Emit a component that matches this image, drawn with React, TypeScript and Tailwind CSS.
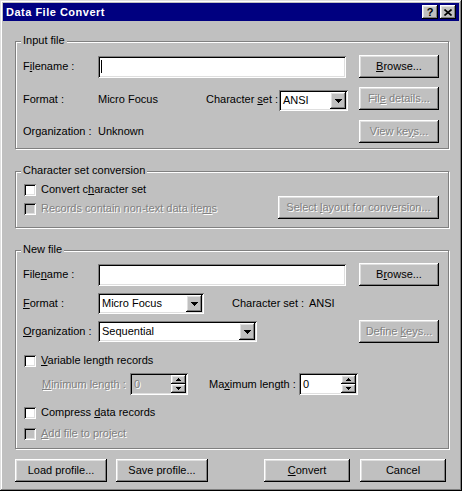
import type { ReactNode } from "react";

// classic 3D bevels
const RAISED =
  "shadow-[inset_-1px_-1px_0_#000,inset_1px_1px_0_#fff,inset_-2px_-2px_0_#808080,inset_2px_2px_0_#dfdfdf]";
const SUNKEN =
  "shadow-[inset_1px_1px_0_#808080,inset_-1px_-1px_0_#fff,inset_2px_2px_0_#000,inset_-2px_-2px_0_#dfdfdf]";
const DIM = "text-[#808080] [text-shadow:1px_1px_0_#fff]";

function Button({
  children,
  className = "",
  disabled = false,
}: {
  children: ReactNode;
  className?: string;
  disabled?: boolean;
}) {
  return (
    <button
      type="button"
      className={`flex h-[23px] shrink-0 items-center justify-center bg-[#c0c0c0] ${RAISED} ${
        disabled ? DIM : "text-black"
      } ${className}`}
    >
      <span>{children}</span>
    </button>
  );
}

function Arrow({ up = false, size = 7 }: { up?: boolean; size?: number }) {
  const h = Math.ceil(size / 2);
  return (
    <svg width={size} height={h} viewBox={`0 0 ${size} ${h}`} shapeRendering="crispEdges">
      <path d={up ? `M0 ${h}H${size}L${size / 2} 0z` : `M0 0H${size}L${size / 2} ${h}z`} fill="#000" />
    </svg>
  );
}

function Combo({ value, className = "" }: { value: string; className?: string }) {
  return (
    <div className={`flex h-[21px] shrink-0 items-stretch bg-white p-[2px] ${SUNKEN} ${className}`}>
      <span className="flex flex-1 items-center pl-[2px]">{value}</span>
      <span className={`flex w-[16px] items-center justify-center bg-[#c0c0c0] ${RAISED}`}>
        <Arrow />
      </span>
    </div>
  );
}

function Spin({ disabled = false, className = "" }: { disabled?: boolean; className?: string }) {
  return (
    <div
      className={`flex h-[22px] shrink-0 p-[2px] ${SUNKEN} ${disabled ? "bg-[#c0c0c0]" : "bg-white"} ${className}`}
    >
      <span className={`flex flex-1 items-center pl-[2px] ${disabled ? DIM : ""}`}>0</span>
      <span className="flex w-[15px] flex-col">
        <span className={`flex flex-1 items-center justify-center bg-[#c0c0c0] ${RAISED}`}>
          <Arrow up size={5} />
        </span>
        <span className={`flex flex-1 items-center justify-center bg-[#c0c0c0] ${RAISED}`}>
          <Arrow size={5} />
        </span>
      </span>
    </div>
  );
}

function Check({ children, disabled = false }: { children: ReactNode; disabled?: boolean }) {
  return (
    <div className="flex h-[13px] items-center">
      <span
        className={`ml-[1px] h-[12px] w-[12px] shrink-0 ${SUNKEN} ${disabled ? "bg-[#c0c0c0]" : "bg-white"}`}
      />
      <span className={`ml-[5px] ${disabled ? DIM : ""}`}>{children}</span>
    </div>
  );
}

function Group({ title, className = "", children }: { title: string; className?: string; children: ReactNode }) {
  return (
    <div
      className={`relative w-[434px] border border-[#808080] pl-[7px] pr-[9px] shadow-[1px_1px_0_#fff,inset_1px_1px_0_#fff] ${className}`}
    >
      <span className="absolute left-[5px] top-[-9px] bg-[#c0c0c0] px-[2px] leading-[14px]">{title}</span>
      {children}
    </div>
  );
}

export default function App() {
  return (
    <div
      className={`h-[491px] w-[462px] bg-[#c0c0c0] p-[3px] font-['Liberation_Sans',Arial,sans-serif] text-[11px] leading-[13px] text-black shadow-[inset_-1px_-1px_0_#000,inset_1px_1px_0_#dfdfdf,inset_-2px_-2px_0_#808080,inset_2px_2px_0_#fff]`}
    >
      {/* caption */}
      <div className="flex h-[18px] items-center bg-[#000080] pl-[3px] pr-[3px]">
        <span className="flex-1 font-bold tracking-[0.5px] text-white">Data File Convert</span>
        <div className="flex gap-[2px]">
          <span className={`flex h-[14px] w-[16px] items-center justify-center bg-[#c0c0c0] font-bold ${RAISED}`}>
            ?
          </span>
          <span className={`flex h-[14px] w-[16px] items-center justify-center bg-[#c0c0c0] ${RAISED}`}>
            <svg width="8" height="7" viewBox="0 0 8 7">
              <path d="M0.5 0.5l7 6M7.5 0.5l-7 6" stroke="#000" strokeWidth="1.6" />
            </svg>
          </span>
        </div>
      </div>

      <div className="px-[12px] pt-[20px]">
        <Group title="Input file" className="h-[108px]">
          <div className="mt-[13px] flex h-[23px] items-center">
            <span className="w-[75px]">
              F<u>i</u>lename :
            </span>
            <div className={`flex h-[22px] w-[248px] items-center bg-white pl-[3px] ${SUNKEN}`}>
              <span className="h-[13px] w-px bg-black" />
            </div>
            <Button className="ml-auto w-[80px]">
              <u>B</u>rowse...
            </Button>
          </div>
          <div className="mt-[9px] flex h-[24px] items-center">
            <span className="w-[75px]">Format :</span>
            <span className="w-[108px]">Micro Focus</span>
            <span className="w-[73px]">
              Character <u>s</u>et :
            </span>
            <Combo value="ANSI" className="w-[69px] self-end" />
            <Button disabled className="ml-auto w-[80px] self-start">
              Fil<u>e</u> details...
            </Button>
          </div>
          <div className="mt-[9px] flex h-[23px] items-center">
            <span className="w-[75px]">Organization :</span>
            <span>Unknown</span>
            <Button disabled className="ml-auto w-[80px]">
              View ke<u>y</u>s...
            </Button>
          </div>
        </Group>

        <Group title="Character set conversion" className="mt-[22px] h-[57px]">
          <div className="mt-[11px]">
            <Check>
              Convert c<u>h</u>aracter set
            </Check>
          </div>
          <div className="flex h-[23px] items-end">
            <div className="mb-[4px]">
              <Check disabled>
                Records contain non-text data ite<u>m</u>s
              </Check>
            </div>
            <Button disabled className="ml-auto w-[161px] self-start">
              Select <u>l</u>ayout for conversion...
            </Button>
          </div>
        </Group>

        <Group title="New file" className="mt-[22px] h-[199px]">
          <div className="mt-[12px] flex h-[23px] items-center">
            <span className="w-[75px]">
              File<u>n</u>ame :
            </span>
            <div className={`h-[22px] w-[248px] bg-white ${SUNKEN}`} />
            <Button className="ml-auto w-[80px]">
              B<u>r</u>owse...
            </Button>
          </div>
          <div className="mt-[7px] flex h-[21px] items-center">
            <span className="w-[75px]">
              <u>F</u>ormat :
            </span>
            <Combo value="Micro Focus" className="w-[106px]" />
            <span className="ml-[28px] w-[77px]">Character set :</span>
            <span>ANSI</span>
          </div>
          <div className="mt-[6px] flex h-[23px] items-center">
            <span className="w-[75px]">
              <u>O</u>rganization :
            </span>
            <Combo value="Sequential" className="w-[159px]" />
            <Button disabled className="ml-auto w-[80px]">
              Define <u>k</u>eys...
            </Button>
          </div>
          <div className="mt-[11px]">
            <Check>
              <u>V</u>ariable length records
            </Check>
          </div>
          <div className="mt-[6px] flex h-[22px] items-center">
            <span className={`ml-[19px] w-[88px] ${DIM}`}>
              <u>M</u>inimum length :
            </span>
            <Spin disabled className="w-[58px]" />
            <span className="ml-[21px] w-[90px]">
              Ma<u>x</u>imum length :
            </span>
            <Spin className="w-[59px]" />
          </div>
          <div className="mt-[11px]">
            <Check>
              Compress <u>d</u>ata records
            </Check>
          </div>
          <div className="mt-[8px]">
            <Check disabled>
              <u>A</u>dd file to project
            </Check>
          </div>
        </Group>

        <div className="mt-[10px] flex">
          <Button className="w-[92px]">Load profile...</Button>
          <Button className="ml-[9px] w-[92px]">Save profile...</Button>
          <Button className="ml-[56px] w-[86px]">
            <u>C</u>onvert
          </Button>
          <Button className="ml-[10px] w-[86px]">Cancel</Button>
        </div>
      </div>
    </div>
  );
}
